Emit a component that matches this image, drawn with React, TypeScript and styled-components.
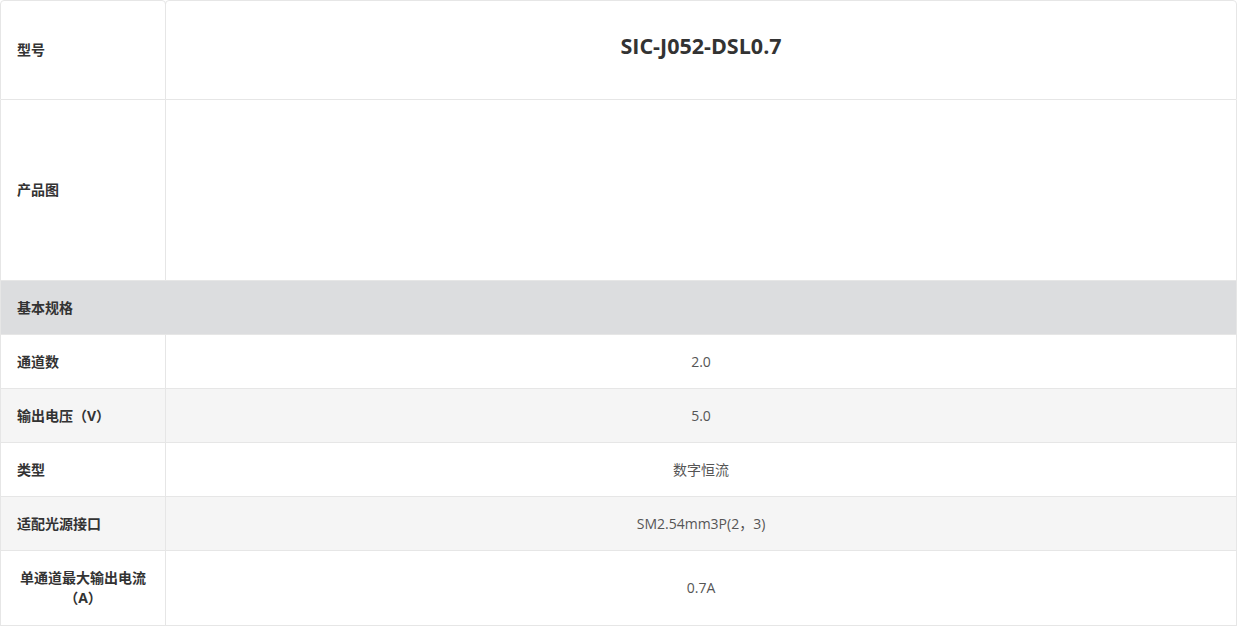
import React from "react";
import styled, { createGlobalStyle, css } from "styled-components";

const Global = createGlobalStyle`
  html, body { margin: 0; padding: 0; background: #ffffff; }
  body { font-family: "Open Sans", "Noto Sans CJK SC", sans-serif; }
  * { box-sizing: border-box; }
`;

const BORDER = "#e6e6e6";

const Table = styled.div`
  width: 1237px;
  display: flex;
  flex-direction: column;
`;

const Row = styled.div<{ $h: number; $zebra?: boolean }>`
  display: grid;
  grid-template-columns: 166px 1fr;
  min-height: ${(p) => p.$h}px;
  background: ${(p) => (p.$zebra ? "#f5f5f5" : "#ffffff")};
`;

const cellBase = css<{ $top?: boolean }>`
  display: flex;
  align-items: center;
  padding: 16px 16px;
  line-height: 20px;
  font-size: 14px;
  border-bottom: 1px solid ${BORDER};
  border-right: 1px solid ${BORDER};
  ${(p) =>
    p.$top &&
    css`
      border-top: 1px solid ${BORDER};
      border-radius: 4px 4px 0 0;
    `}
`;

const LabelCell = styled.div<{ $top?: boolean }>`
  ${cellBase};
  border-left: 1px solid ${BORDER};
  color: #333333;
  font-weight: 700;
`;

const LabelText = styled.span`
  display: inline-block;
  text-align: center;
`;

const ValueCell = styled.div<{ $top?: boolean }>`
  ${cellBase};
  justify-content: center;
  color: #555555;
  font-weight: 400;
  ${(p) =>
    p.$top &&
    css`
      border-left: 1px solid ${BORDER};
      margin-left: -1px;
    `}
`;

const Title = styled.h2`
  margin: 0 0 8px;
  font-size: 21.5px;
  font-weight: 700;
  color: #333333;
`;

const SectionRow = styled.div`
  display: flex;
  align-items: center;
  min-height: 54px;
  padding: 0 16px 1px;
  background: #dcdddf;
  border-left: 1px solid ${BORDER};
  border-right: 1px solid ${BORDER};
  border-bottom: 1px solid ${BORDER};
  font-size: 14px;
  font-weight: 700;
  color: #333333;
`;

type Spec = { label: string; value: string; h?: number };

const specs: Spec[] = [
  { label: "通道数", value: "2.0" },
  { label: "输出电压（V）", value: "5.0" },
  { label: "类型", value: "数字恒流" },
  { label: "适配光源接口", value: "SM2.54mm3P(2，3)" },
  { label: "单通道最大输出电流（A）", value: "0.7A", h: 75 },
];

export default function App() {
  return (
    <>
      <Global />
      <Table>
        <Row $h={100}>
          <LabelCell $top>
            <LabelText>型号</LabelText>
          </LabelCell>
          <ValueCell $top>
            <Title>SIC-J052-DSL0.7</Title>
          </ValueCell>
        </Row>
        <Row $h={181}>
          <LabelCell>
            <LabelText>产品图</LabelText>
          </LabelCell>
          <ValueCell />
        </Row>
        <SectionRow>基本规格</SectionRow>
        {specs.map((s, i) => (
          <Row key={s.label} $h={s.h ?? 54} $zebra={i % 2 === 1}>
            <LabelCell>
              <LabelText>{s.label}</LabelText>
            </LabelCell>
            <ValueCell>{s.value}</ValueCell>
          </Row>
        ))}
      </Table>
    </>
  );
}
